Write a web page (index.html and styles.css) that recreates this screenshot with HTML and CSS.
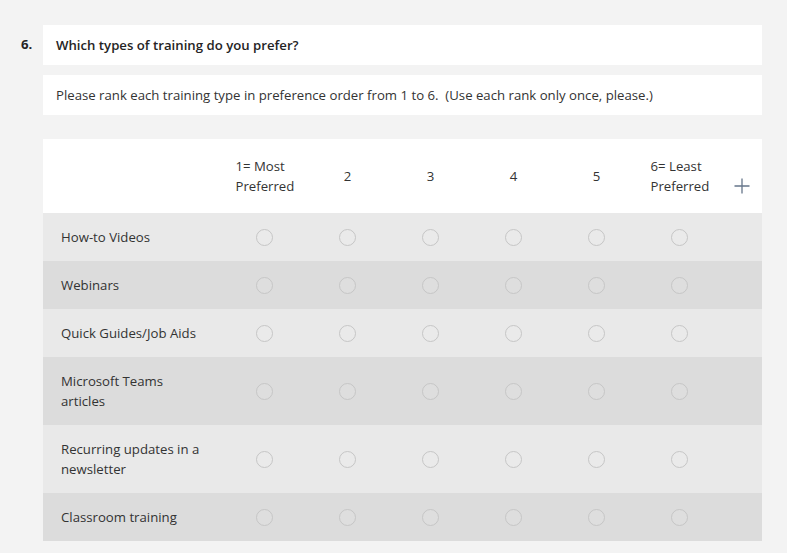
FILE: index.html
```html
<!DOCTYPE html>
<html>
<head>
<meta charset="utf-8">
<link rel="stylesheet" href="styles.css">
</head>
<body>
<div class="page">
  <div class="qnum">6.</div>
  <div class="qbody">
    <div class="card title">Which types of training do you prefer?</div>
    <div class="card subtitle">Please rank each training type in preference order from 1 to 6.&nbsp; (Use each rank only once, please.)</div>
    <div class="grid">
      <div class="hcell label"></div>
      <div class="hcell"><span class="htext">1= Most Preferred</span></div>
      <div class="hcell">2</div>
      <div class="hcell">3</div>
      <div class="hcell">4</div>
      <div class="hcell">5</div>
      <div class="hcell"><span class="htext">6= Least Preferred</span></div>
      <div class="hcell plus">
        <svg width="18" height="18" viewBox="0 0 18 18"><path d="M9 1.5V16.5M1.5 9H16.5" stroke="#66768a" stroke-width="1.3" fill="none"/></svg>
      </div>

      <div class="row odd">
        <div class="cell label">How-to Videos</div>
        <div class="cell"><span class="radio"></span></div><div class="cell"><span class="radio"></span></div><div class="cell"><span class="radio"></span></div><div class="cell"><span class="radio"></span></div><div class="cell"><span class="radio"></span></div><div class="cell"><span class="radio"></span></div><div class="cell"></div>
      </div>
      <div class="row even">
        <div class="cell label">Webinars</div>
        <div class="cell"><span class="radio"></span></div><div class="cell"><span class="radio"></span></div><div class="cell"><span class="radio"></span></div><div class="cell"><span class="radio"></span></div><div class="cell"><span class="radio"></span></div><div class="cell"><span class="radio"></span></div><div class="cell"></div>
      </div>
      <div class="row odd">
        <div class="cell label">Quick Guides/Job Aids</div>
        <div class="cell"><span class="radio"></span></div><div class="cell"><span class="radio"></span></div><div class="cell"><span class="radio"></span></div><div class="cell"><span class="radio"></span></div><div class="cell"><span class="radio"></span></div><div class="cell"><span class="radio"></span></div><div class="cell"></div>
      </div>
      <div class="row even">
        <div class="cell label">Microsoft Teams articles</div>
        <div class="cell"><span class="radio"></span></div><div class="cell"><span class="radio"></span></div><div class="cell"><span class="radio"></span></div><div class="cell"><span class="radio"></span></div><div class="cell"><span class="radio"></span></div><div class="cell"><span class="radio"></span></div><div class="cell"></div>
      </div>
      <div class="row odd">
        <div class="cell label">Recurring updates in a newsletter</div>
        <div class="cell"><span class="radio"></span></div><div class="cell"><span class="radio"></span></div><div class="cell"><span class="radio"></span></div><div class="cell"><span class="radio"></span></div><div class="cell"><span class="radio"></span></div><div class="cell"><span class="radio"></span></div><div class="cell"></div>
      </div>
      <div class="row even">
        <div class="cell label">Classroom training</div>
        <div class="cell"><span class="radio"></span></div><div class="cell"><span class="radio"></span></div><div class="cell"><span class="radio"></span></div><div class="cell"><span class="radio"></span></div><div class="cell"><span class="radio"></span></div><div class="cell"><span class="radio"></span></div><div class="cell"></div>
      </div>
    </div>
  </div>
</div>
</body>
</html>
```
FILE: styles.css
```css
html, body {
  margin: 0;
  padding: 0;
  background: #f3f3f3;
  font-family: "Open Sans", "Segoe UI", Arial, sans-serif;
  font-size: 13.2px;
  color: #333333;
}
.page {
  display: flex;
  padding: 25px 0 0 0;
}
.qnum {
  width: 22px;
  padding-left: 21px;
  padding-top: 10px;
  font-weight: 700;
  line-height: 18px;
  color: #252424;
}
.qbody {
  width: 719px;
  display: flex;
  flex-direction: column;
}
.card {
  background: #ffffff;
  height: 40px;
  display: flex;
  align-items: center;
  padding-left: 13px;
  box-sizing: border-box;
}
.title {
  font-weight: 600;
  color: #252424;
}
.subtitle {
  margin-top: 10px;
}
.grid {
  margin-top: 24px;
  display: grid;
  grid-template-columns: 180px repeat(6, 83px) 1fr;
}
.hcell {
  background: #ffffff;
  height: 74px;
  display: flex;
  align-items: center;
  justify-content: center;
  line-height: 20px;
}
.htext {
  display: inline-block;
  max-width: 62px;
  margin-left: 4px;
  text-align: left;
}
.hcell.plus {
  align-items: flex-end;
  justify-content: flex-start;
  padding-bottom: 18px;
  padding-left: 12px;
  box-sizing: border-box;
}
.hcell.plus svg {
  display: block;
}
.row {
  display: contents;
}
.cell {
  display: flex;
  align-items: center;
  justify-content: center;
  padding: 14px 0;
  line-height: 20px;
}
.row.odd .cell { background: #e9e9e9; }
.row.even .cell { background: #dcdcdc; }
.cell.label {
  justify-content: flex-start;
  padding-left: 18px;
  padding-right: 19px;
}
.radio {
  width: 15px;
  height: 15px;
  border: 1px solid #c6c6c6;
  border-radius: 50%;
  box-sizing: content-box;
  background: rgba(255,255,255,0.08);
}
```
